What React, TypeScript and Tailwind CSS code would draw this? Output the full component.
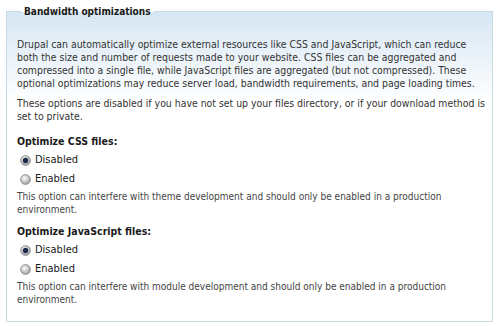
import React from "react";

function Radio({ checked }: { checked: boolean }) {
  return (
    <svg width="11" height="11" viewBox="0 0 12 12" className="shrink-0">
      <defs>
        <radialGradient id={checked ? "rc" : "ru"} cx="40%" cy="35%" r="70%">
          <stop offset="0%" stopColor="#ffffff" />
          <stop offset="100%" stopColor="#9a9a9a" />
        </radialGradient>
      </defs>
      <circle cx="6" cy="6" r="5.3" fill={checked ? "url(#rc)" : "url(#ru)"} stroke="#7d7d7d" strokeWidth="0.9" />
      {checked && <circle cx="6" cy="6" r="2.9" fill="#1a2a4a" />}
    </svg>
  );
}

function Option({ label, checked }: { label: string; checked: boolean }) {
  return (
    <div className="flex items-center gap-[4px] pl-[3px] h-[19px]">
      <Radio checked={checked} />
      <span className="text-[11px] text-[#1a1a1a]">{label}</span>
    </div>
  );
}

export default function App() {
  return (
    <div
      className="w-[500px] h-[326px] bg-white pl-[6px] pr-[7px] pt-[4px] overflow-hidden"
      style={{ fontFamily: '"DejaVu Sans Condensed", "DejaVu Sans", Verdana, sans-serif' }}
    >
      <fieldset className="min-w-0 border border-[#c9d9e2] h-[318px] px-[10px] bg-[linear-gradient(to_bottom,#d6e6f3_0px,#ffffff_90px)]">
        <legend className="ml-[4px] px-[3px] text-[10px] font-bold text-[#1a1a1a] leading-[15px]">
          Bandwidth optimizations
        </legend>
        <p className="mt-[19px] text-[10.4px] leading-[13px] text-[#333] whitespace-nowrap">
          Drupal can automatically optimize external resources like CSS and JavaScript, which can reduce<br />
          both the size and number of requests made to your website. CSS files can be aggregated and<br />
          compressed into a single file, while JavaScript files are aggregated (but not compressed). These<br />
          optional optimizations may reduce server load, bandwidth requirements, and page loading times.
        </p>
        <p className="mt-[7px] text-[10.4px] leading-[13px] text-[#333] whitespace-nowrap">
          These options are disabled if you have not set up your files directory, or if your download method is<br />
          set to private.
        </p>
        <div className="mt-[10px] text-[10.5px] font-bold text-[#1a1a1a] leading-[16px]">Optimize CSS files:</div>
        <div className="mt-[2px]">
          <Option label="Disabled" checked />
          <Option label="Enabled" checked={false} />
        </div>
        <p className="mt-[1px] text-[10px] leading-[13px] text-[#444] whitespace-nowrap">
          This option can interfere with theme development and should only be enabled in a production<br />
          environment.
        </p>
        <div className="mt-[7px] text-[10.5px] font-bold text-[#1a1a1a] leading-[16px]">Optimize JavaScript files:</div>
        <div className="mt-[2px]">
          <Option label="Disabled" checked />
          <Option label="Enabled" checked={false} />
        </div>
        <p className="mt-[1px] text-[10px] leading-[13px] text-[#444] whitespace-nowrap">
          This option can interfere with module development and should only be enabled in a production<br />
          environment.
        </p>
      </fieldset>
    </div>
  );
}
